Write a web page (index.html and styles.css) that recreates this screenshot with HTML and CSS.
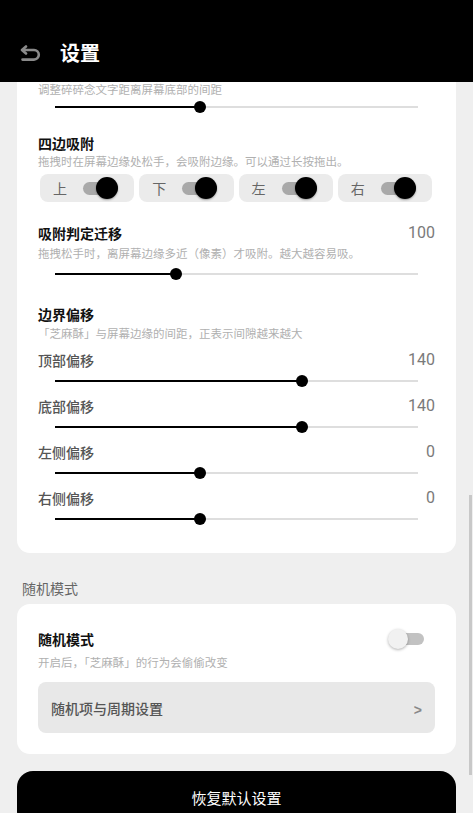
FILE: index.html
```html
<!DOCTYPE html>
<html lang="zh-CN">
<head>
    <meta charset="UTF-8" />
    <meta name="viewport" content="width=device-width, initial-scale=1.0"/>
    <title>设置</title>
    <link rel="stylesheet" href="styles.css">
</head>
<body>

<header class="topbar">
    <svg class="back-icon" width="22" height="16" viewBox="0 0 22 16" fill="none" stroke="#8a8a8a" stroke-width="2.6" stroke-linecap="round" stroke-linejoin="round">
        <path d="M6 1.5 L2 5 L6 8.5"/>
        <path d="M2.5 5 H14 A4.8 4.8 0 0 1 14 14.6 H2.5"/>
    </svg>
    <h1>设置</h1>
</header>

<main class="page">
    <section class="card card-first">
        <p class="desc desc-top">调整碎碎念文字距离屏幕底部的间距</p>
        <div class="slider slider-tight">
            <div class="fill" style="width: 40%"></div><span class="knob"></span><div class="rest"></div>
        </div>

        <div class="block">
            <h3 class="title">四边吸附</h3>
            <p class="desc">拖拽时在屏幕边缘处松手，会吸附边缘。可以通过长按拖出。</p>
            <div class="chips">
                <div class="chip"><span>上</span><span class="switch on"><i></i></span></div>
                <div class="chip"><span>下</span><span class="switch on"><i></i></span></div>
                <div class="chip"><span>左</span><span class="switch on"><i></i></span></div>
                <div class="chip"><span>右</span><span class="switch on"><i></i></span></div>
            </div>
        </div>

        <div class="block block-snap">
            <div class="title-row">
                <h3 class="title">吸附判定迁移</h3>
                <span class="value">100</span>
            </div>
            <p class="desc">拖拽松手时，离屏幕边缘多近（像素）才吸附。越大越容易吸。</p>
            <div class="slider">
                <div class="fill" style="width: 33.3%"></div><span class="knob"></span><div class="rest"></div>
            </div>
        </div>

        <div class="block block-offset">
            <h3 class="title">边界偏移</h3>
            <p class="desc">「芝麻酥」与屏幕边缘的间距，正表示间隙越来越大</p>

            <div class="sub-row"><span class="sub-label">顶部偏移</span><span class="value">140</span></div>
            <div class="slider slider-sub">
                <div class="fill" style="width: 68%"></div><span class="knob"></span><div class="rest"></div>
            </div>

            <div class="sub-row"><span class="sub-label">底部偏移</span><span class="value">140</span></div>
            <div class="slider slider-sub">
                <div class="fill" style="width: 68%"></div><span class="knob"></span><div class="rest"></div>
            </div>

            <div class="sub-row"><span class="sub-label">左侧偏移</span><span class="value">0</span></div>
            <div class="slider slider-sub">
                <div class="fill" style="width: 40%"></div><span class="knob"></span><div class="rest"></div>
            </div>

            <div class="sub-row"><span class="sub-label">右侧偏移</span><span class="value">0</span></div>
            <div class="slider slider-sub">
                <div class="fill" style="width: 40%"></div><span class="knob"></span><div class="rest"></div>
            </div>
        </div>
    </section>

    <h2 class="section-label">随机模式</h2>

    <section class="card card-random">
        <div class="title-row">
            <h3 class="title">随机模式</h3>
            <span class="switch off"><i></i></span>
        </div>
        <p class="desc desc-random">开启后，「芝麻酥」的行为会偷偷改变</p>
        <div class="link-row">
            <span>随机项与周期设置</span>
            <span class="chevron">&gt;</span>
        </div>
    </section>

    <button class="reset-btn">恢复默认设置</button>

    <div class="scroll-thumb"></div>
</main>

</body>
</html>
```

FILE: styles.css
```css
body {
    margin: 0;
    font-family: "Noto Sans CJK SC", "Noto Sans", sans-serif;
    background: #efefef;
    color: #111;
}

/* Header */
.topbar {
    display: flex;
    align-items: center;
    height: 58px;
    padding: 24px 0 0 20px;
    background: #000;
    position: relative;
    z-index: 2;
}
.back-icon {
    margin-right: 18px;
}
.topbar h1 {
    margin: 0;
    font-size: 20px;
    font-weight: bold;
    color: #fff;
    line-height: 26px;
}

/* Page (scrolled) */
.page {
    height: 731px;
    overflow: hidden;
    position: relative;
}

.card {
    margin: 0 17px;
    background: #fff;
    border-radius: 13px;
    padding: 0 21px;
}
.card-first {
    border-radius: 0 0 13px 13px;
    padding-bottom: 28px;
}

.title {
    margin: 0;
    font-size: 14px;
    font-weight: bold;
    line-height: 20px;
    color: #111;
}
.desc {
    margin: 0;
    font-size: 11.5px;
    line-height: 16px;
    color: #b0b0b0;
    white-space: nowrap;
}
.desc-top {
    margin-top: -1px;
}
.value {
    font-family: Roboto, "Noto Sans CJK SC", sans-serif;
    font-size: 16px;
    color: #7a7a7a;
    line-height: 22px;
}
.title-row {
    display: flex;
    align-items: center;
    justify-content: space-between;
    height: 22px;
}

/* Slider */
.slider {
    display: flex;
    align-items: center;
    height: 12px;
    margin: 7px 17px 0;
}
.slider-tight {
    margin-top: 4px;
}
.slider-sub {
    margin-top: 4px;
}
.slider .fill {
    height: 2px;
    background: #000;
}
.slider .knob {
    flex: none;
    width: 12px;
    height: 12px;
    border-radius: 50%;
    background: #000;
    margin: 0 -6px;
    position: relative;
    z-index: 1;
}
.slider .rest {
    flex: 1;
    height: 2px;
    background: #dedede;
}

.block {
    margin-top: 20px;
}
.block-snap {
    margin-top: 20px;
}
.block-snap .desc {
    margin-top: 1px;
}
.block-offset {
    margin-top: 24px;
}
.block-offset .desc {
    margin-top: 1px;
}

/* Four-edge chips */
.chips {
    display: grid;
    grid-template-columns: repeat(4, 1fr);
    gap: 5px;
    margin: 5px 3px 0 2px;
}
.chip {
    display: flex;
    align-items: center;
    height: 28px;
    padding-left: 13px;
    background: #ebebeb;
    border-radius: 8px;
    font-size: 14px;
    color: #666;
}
.chip .switch {
    margin-left: 16px;
}

/* Switch */
.switch {
    display: flex;
    align-items: center;
    position: relative;
    width: 35px;
    height: 22px;
}
.switch::before {
    content: "";
    width: 100%;
    height: 13px;
    border-radius: 7px;
    background: #a9a9a9;
}
.switch i {
    position: absolute;
    top: 0;
    right: 0;
    width: 22px;
    height: 22px;
    border-radius: 50%;
    background: #000;
    box-shadow: 0 1px 2px rgba(0,0,0,0.35);
}
.switch.off {
    width: 36px;
    height: 20px;
    margin-right: 11px;
}
.switch.off::before {
    height: 12px;
    margin-left: 5px;
    background: #c2c2c2;
}
.switch.off i {
    left: 0;
    right: auto;
    width: 20px;
    height: 20px;
    background: #f1f1f1;
    box-shadow: 0 1px 3px rgba(0,0,0,0.3);
}

/* Offsets */
.sub-row {
    display: flex;
    justify-content: space-between;
    align-items: center;
    height: 22px;
    margin-top: 8px;
}
.sub-label {
    font-size: 14px;
    color: #555;
    font-weight: 500;
}

/* Random mode */
.section-label {
    margin: 25px 0 6px 22px;
    font-size: 14px;
    font-weight: normal;
    line-height: 20px;
    color: #666;
}
.card-random {
    padding-top: 24px;
    padding-bottom: 21px;
}
.desc-random {
    margin-top: 4px;
}
.link-row {
    display: flex;
    justify-content: space-between;
    align-items: center;
    height: 51px;
    margin-top: 12px;
    padding: 0 13px;
    background: #e8e8e8;
    border-radius: 8px;
    font-size: 14px;
    font-weight: 500;
    color: #555;
}
.chevron {
    font-family: "Liberation Sans", sans-serif;
    font-weight: bold;
    font-size: 14px;
    color: #888;
    margin-top: 4px;
}

.reset-btn {
    display: block;
    width: calc(100% - 34px);
    height: 56px;
    margin: 17px 17px 0;
    padding: 0 0 4px;
    border: none;
    border-radius: 16px;
    background: #000;
    color: #fff;
    font-family: inherit;
    font-size: 15px;
}

.scroll-thumb {
    position: absolute;
    right: 1px;
    top: 413px;
    width: 3px;
    height: 280px;
    background: #c8c8c8;
}
```
